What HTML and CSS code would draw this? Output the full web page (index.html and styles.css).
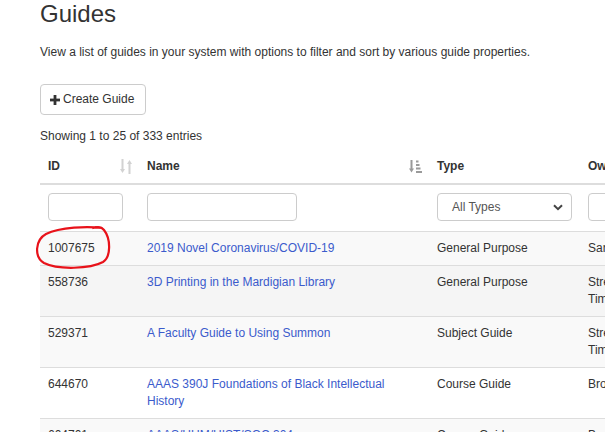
FILE: index.html
```html
<!DOCTYPE html>
<html>
<head>
<meta charset="utf-8">
<link rel="stylesheet" href="styles.css">
</head>
<body>
<div class="page">
  <h1 class="title">Guides</h1>
  <p class="lead">View a list of guides in your system with options to filter and sort by various guide properties.</p>
  <button class="btn" type="button"><svg class="plus" width="10" height="10" viewBox="0 0 10 10"><rect x="3.6" y="0" width="2.8" height="10" fill="#333"/><rect x="0" y="3.6" width="10" height="2.8" fill="#333"/></svg>Create Guide</button>
  <div class="info">Showing 1 to 25 of 333 entries</div>
  <div class="table-wrap">
    <table class="grid">
      <colgroup><col class="c-id"><col class="c-name"><col class="c-type"><col class="c-owner"><col class="c-more"></colgroup>
      <thead>
        <tr class="head">
          <th><div class="th-in"><span>ID</span>
            <svg class="sort" width="12" height="15" viewBox="0 0 12 15"><g fill="#d2d2d2"><rect x="1.5" y="0" width="2" height="11"/><path d="M0 10 L5 10 L2.5 14 Z"/><rect x="8.5" y="4" width="2" height="11"/><path d="M7 5 L12 5 L9.5 1 Z"/></g></svg></div></th>
          <th><div class="th-in"><span>Name</span>
            <svg class="sort" width="13" height="13" viewBox="0 0 13 13"><g fill="#9a9a9a"><rect x="1.5" y="0" width="2" height="9"/><path d="M0 8.5 L5 8.5 L2.5 12.5 Z"/><rect x="7" y="0.5" width="2.5" height="2"/><rect x="7" y="4" width="3.5" height="2"/><rect x="7" y="7.5" width="4.5" height="2"/><rect x="7" y="11" width="6" height="2"/></g></svg></div></th>
          <th>Type</th>
          <th>Owner</th>
          <th>Status</th>
        </tr>
        <tr class="filters">
          <td><input class="fld fld-id" type="text"></td>
          <td><input class="fld fld-name" type="text"></td>
          <td><div class="sel">All Types<svg width="10" height="7" viewBox="0 0 10 7"><path d="M1 1.2 L5 5.2 L9 1.2" fill="none" stroke="#444" stroke-width="2"/></svg></div></td>
          <td><input class="fld fld-owner" type="text"></td>
          <td></td>
        </tr>
      </thead>
      <tbody>
        <tr class="odd">
          <td class="circled">1007675<svg class="mark" width="80" height="45" viewBox="-5 -5 80 45"><path d="M64 -2 C50 -4 22 -3 8 4 C-3 10 -4 27 6 33 C20 40 52 39 65 32 C73 27 73 9 66 0 C63 -4 58 -3 55 -2" fill="none" stroke="#e8121a" stroke-width="2.2" stroke-linecap="round"/></svg></td>
          <td><a href="#">2019 Novel Coronavirus/COVID-19</a></td>
          <td>General Purpose</td>
          <td>Sarah Johnson</td>
          <td>Published</td>
        </tr>
        <tr class="hover">
          <td>558736</td>
          <td><a href="#">3D Printing in the Mardigian Library</a></td>
          <td>General Purpose</td>
          <td>Streeter-Nowak Timothy</td>
          <td>Published</td>
        </tr>
        <tr class="odd">
          <td>529371</td>
          <td><a href="#">A Faculty Guide to Using Summon</a></td>
          <td>Subject Guide</td>
          <td>Streeter-Nowak Timothy</td>
          <td>Published</td>
        </tr>
        <tr>
          <td>644670</td>
          <td><a href="#">AAAS 390J Foundations of Black Intellectual History</a></td>
          <td>Course Guide</td>
          <td>Brown, Kim</td>
          <td>Published</td>
        </tr>
        <tr class="odd">
          <td>604701</td>
          <td><a href="#">AAAS/HUM/HIST/SOC 304</a></td>
          <td>Course Guide</td>
          <td>Brown, Kim</td>
          <td>Published</td>
        </tr>
      </tbody>
    </table>
  </div>
</div>
</body>
</html>
```
FILE: styles.css
```css
html, body {
  margin: 0;
  padding: 0;
  overflow: hidden;
  background: #fff;
}
body {
  font-family: "Liberation Sans", Arial, sans-serif;
  font-size: 12px;
  line-height: 17px;
  color: #333;
}
.page {
  padding: 1px 0 0 40px;
}
.title {
  margin: 0;
  font-size: 24px;
  line-height: 26px;
  font-weight: normal;
  color: #333;
}
.lead {
  margin: 17px 0 0;
}
.btn {
  margin-top: 23px;
  display: flex;
  align-items: center;
  height: 31px;
  padding: 6px 11px 6px 9px;
  border: 1px solid #ccc;
  border-radius: 4px;
  background: #fff;
  font-family: inherit;
  font-size: 12px;
  line-height: 17px;
  color: #333;
}
.plus {
  margin-right: 3px;
}
.info {
  margin-top: 13px;
}
.table-wrap {
  margin: 5px 0 0 -10px;
  padding-left: 10px;
  width: 565px;
  overflow: hidden;
}
.grid {
  border-collapse: collapse;
  table-layout: fixed;
  width: 820px;
}
.c-id { width: 99px; }
.c-name { width: 290px; }
.c-type { width: 151px; }
.c-owner { width: 130px; }
.c-more { width: 150px; }
.grid th,
.grid td {
  padding: 8px;
  text-align: left;
  vertical-align: top;
}
.grid th {
  font-weight: bold;
  border-bottom: 2px solid #ddd;
}
.th-in {
  display: flex;
  justify-content: space-between;
  align-items: center;
}
.th-in .sort {
  margin-right: -1px;
}
.grid td {
  border-top: 1px solid #ddd;
}
.grid .filters td {
  border-top: none;
  padding-bottom: 10px;
}
.fld {
  display: block;
  box-sizing: border-box;
  height: 28px;
  border: 1px solid #ccc;
  border-radius: 4px;
  background: #fff;
  margin: 0;
}
.fld-id { width: 75px; }
.fld-name { width: 150px; }
.fld-owner { width: 114px; }
.sel {
  box-sizing: border-box;
  height: 28px;
  width: 135px;
  border: 1px solid #ccc;
  border-radius: 4px;
  padding: 0 8px 0 14px;
  display: flex;
  align-items: center;
  justify-content: space-between;
  color: #555;
}
.odd td { background: #f9f9f9; }
.hover td { background: #f5f5f5; }
.grid a {
  color: #3b5bcc;
  text-decoration: none;
}
.circled {
  position: relative;
}
.mark {
  position: absolute;
  left: -7px;
  top: -7px;
  overflow: visible;
}
```
